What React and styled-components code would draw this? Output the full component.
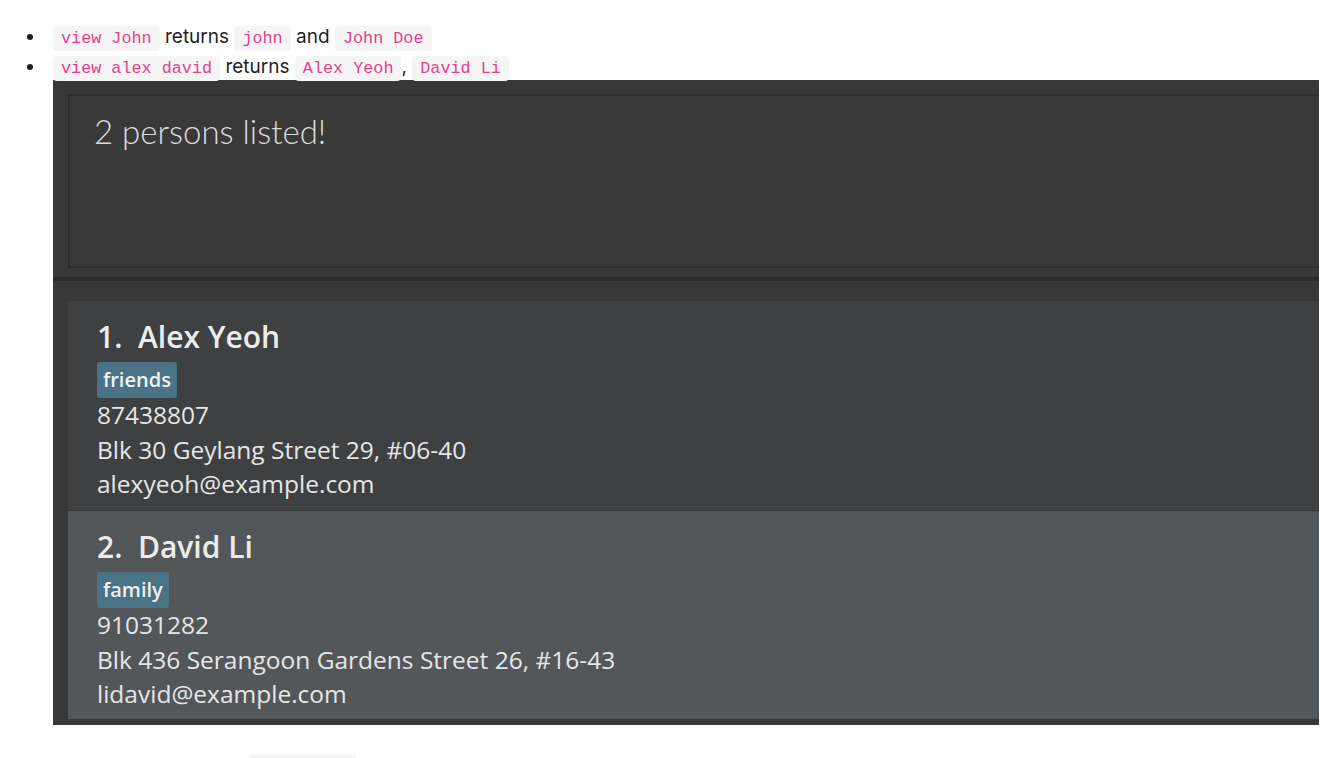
import React from "react";
import styled, { createGlobalStyle } from "styled-components";

const Global = createGlobalStyle`
  html, body { margin: 0; padding: 0; background: #ffffff; }
  body { font-family: Inter, "Noto Sans", sans-serif; color: #1f1f1f; }
`;

const Page = styled.div`
  padding: 22px 10px 0 13px;
  height: 758px;
  box-sizing: border-box;
  overflow: hidden;
`;

const List = styled.ul`
  margin: 0;
  padding-left: 33px;
  list-style: disc;
`;

const Item = styled.li`
  padding-left: 7px;
  font-size: 19px;
  line-height: 30px;
`;

const Code = styled.code`
  font-family: "Liberation Mono", "DejaVu Sans Mono", monospace;
  font-size: ${(p) => p.$size || 16.8}px;
  line-height: 20px;
  color: #e83e8c;
  background: #f5f5f5;
  border-radius: 4px;
  padding: 3px 8px;
`;

const Shot = styled.div`
  width: 1266px;
  height: 645px;
  margin-top: -2px;
  background: #383838;
  padding-top: 14px;
  box-sizing: border-box;
  overflow: hidden;
  display: flex;
  flex-direction: column;
`;

const ResultBox = styled.div`
  margin-left: 15px;
  margin-right: -6px;
  height: 174px;
  box-sizing: border-box;
  border: 2px solid #2d2d2d;
  background: #393939;
  padding: 20px 24px;
  font-family: Lato, "Open Sans", sans-serif;
  font-weight: 300;
  font-size: 33px;
  color: #dcdcdc;
`;

const Divider = styled.div`
  margin-top: 9px;
  height: 4px;
  background: #2c2c2c;
`;

const Cards = styled.div`
  margin-top: 20px;
  padding-left: 15px;
  display: flex;
  flex-direction: column;
`;

const Card = styled.div`
  background: ${(p) => (p.$alt ? "#53575a" : "#3f4042")};
  height: ${(p) => p.$h}px;
  box-sizing: border-box;
  padding: 15px 0 0 29px;
  display: flex;
  flex-direction: column;
  align-items: flex-start;
  font-family: "Open Sans", "Noto Sans", sans-serif;
  color: #e8e8e8;
  & + & { margin-top: 1px; }
`;

const Name = styled.div`
  font-size: 30px;
  font-weight: 600;
  line-height: 42px;
  white-space: pre;
  color: #ececec;
`;

const Tag = styled.span`
  margin-top: 4px;
  height: 36px;
  box-sizing: border-box;
  padding: 0 6px;
  background: #4a7386;
  border-radius: 3px;
  font-size: 20px;
  font-weight: 600;
  line-height: 36px;
  color: #f0f0f0;
`;

const Detail = styled.div`
  font-size: 24.5px;
  line-height: 34.5px;
  color: #e6e6e6;
`;

const Heading = styled.h3`
  margin: 26px 0 0 0;
  font-size: 25.5px;
  font-weight: 600;
  line-height: 36px;
`;

const persons = [
  { n: 1, name: "Alex Yeoh", tag: "friends", phone: "87438807", addr: "Blk 30 Geylang Street 29, #06-40", email: "alexyeoh@example.com", h: 209 },
  { n: 2, name: "David Li", tag: "family", phone: "91031282", addr: "Blk 436 Serangoon Gardens Street 26, #16-43", email: "lidavid@example.com", h: 208 },
];

export default function App() {
  return (
    <>
      <Global />
      <Page>
        <List>
          <Item>
            <Code>view John</Code> returns <Code>john</Code> and <Code>John Doe</Code>
          </Item>
          <Item>
            <Code>view alex david</Code> returns <Code>Alex Yeoh</Code>, <Code>David Li</Code>
            <Shot>
              <ResultBox>2 persons listed!</ResultBox>
              <Divider />
              <Cards>
                {persons.map((p, i) => (
                  <Card key={p.n} $alt={i % 2 === 1} $h={p.h}>
                    <Name>{`${p.n}.  ${p.name}`}</Name>
                    <Tag>{p.tag}</Tag>
                    <Detail>{p.phone}</Detail>
                    <Detail>{p.addr}</Detail>
                    <Detail>{p.email}</Detail>
                  </Card>
                ))}
              </Cards>
            </Shot>
          </Item>
        </List>
        <Heading>
          Deleting a person : <Code $size={25}>delete</Code>
        </Heading>
      </Page>
    </>
  );
}
